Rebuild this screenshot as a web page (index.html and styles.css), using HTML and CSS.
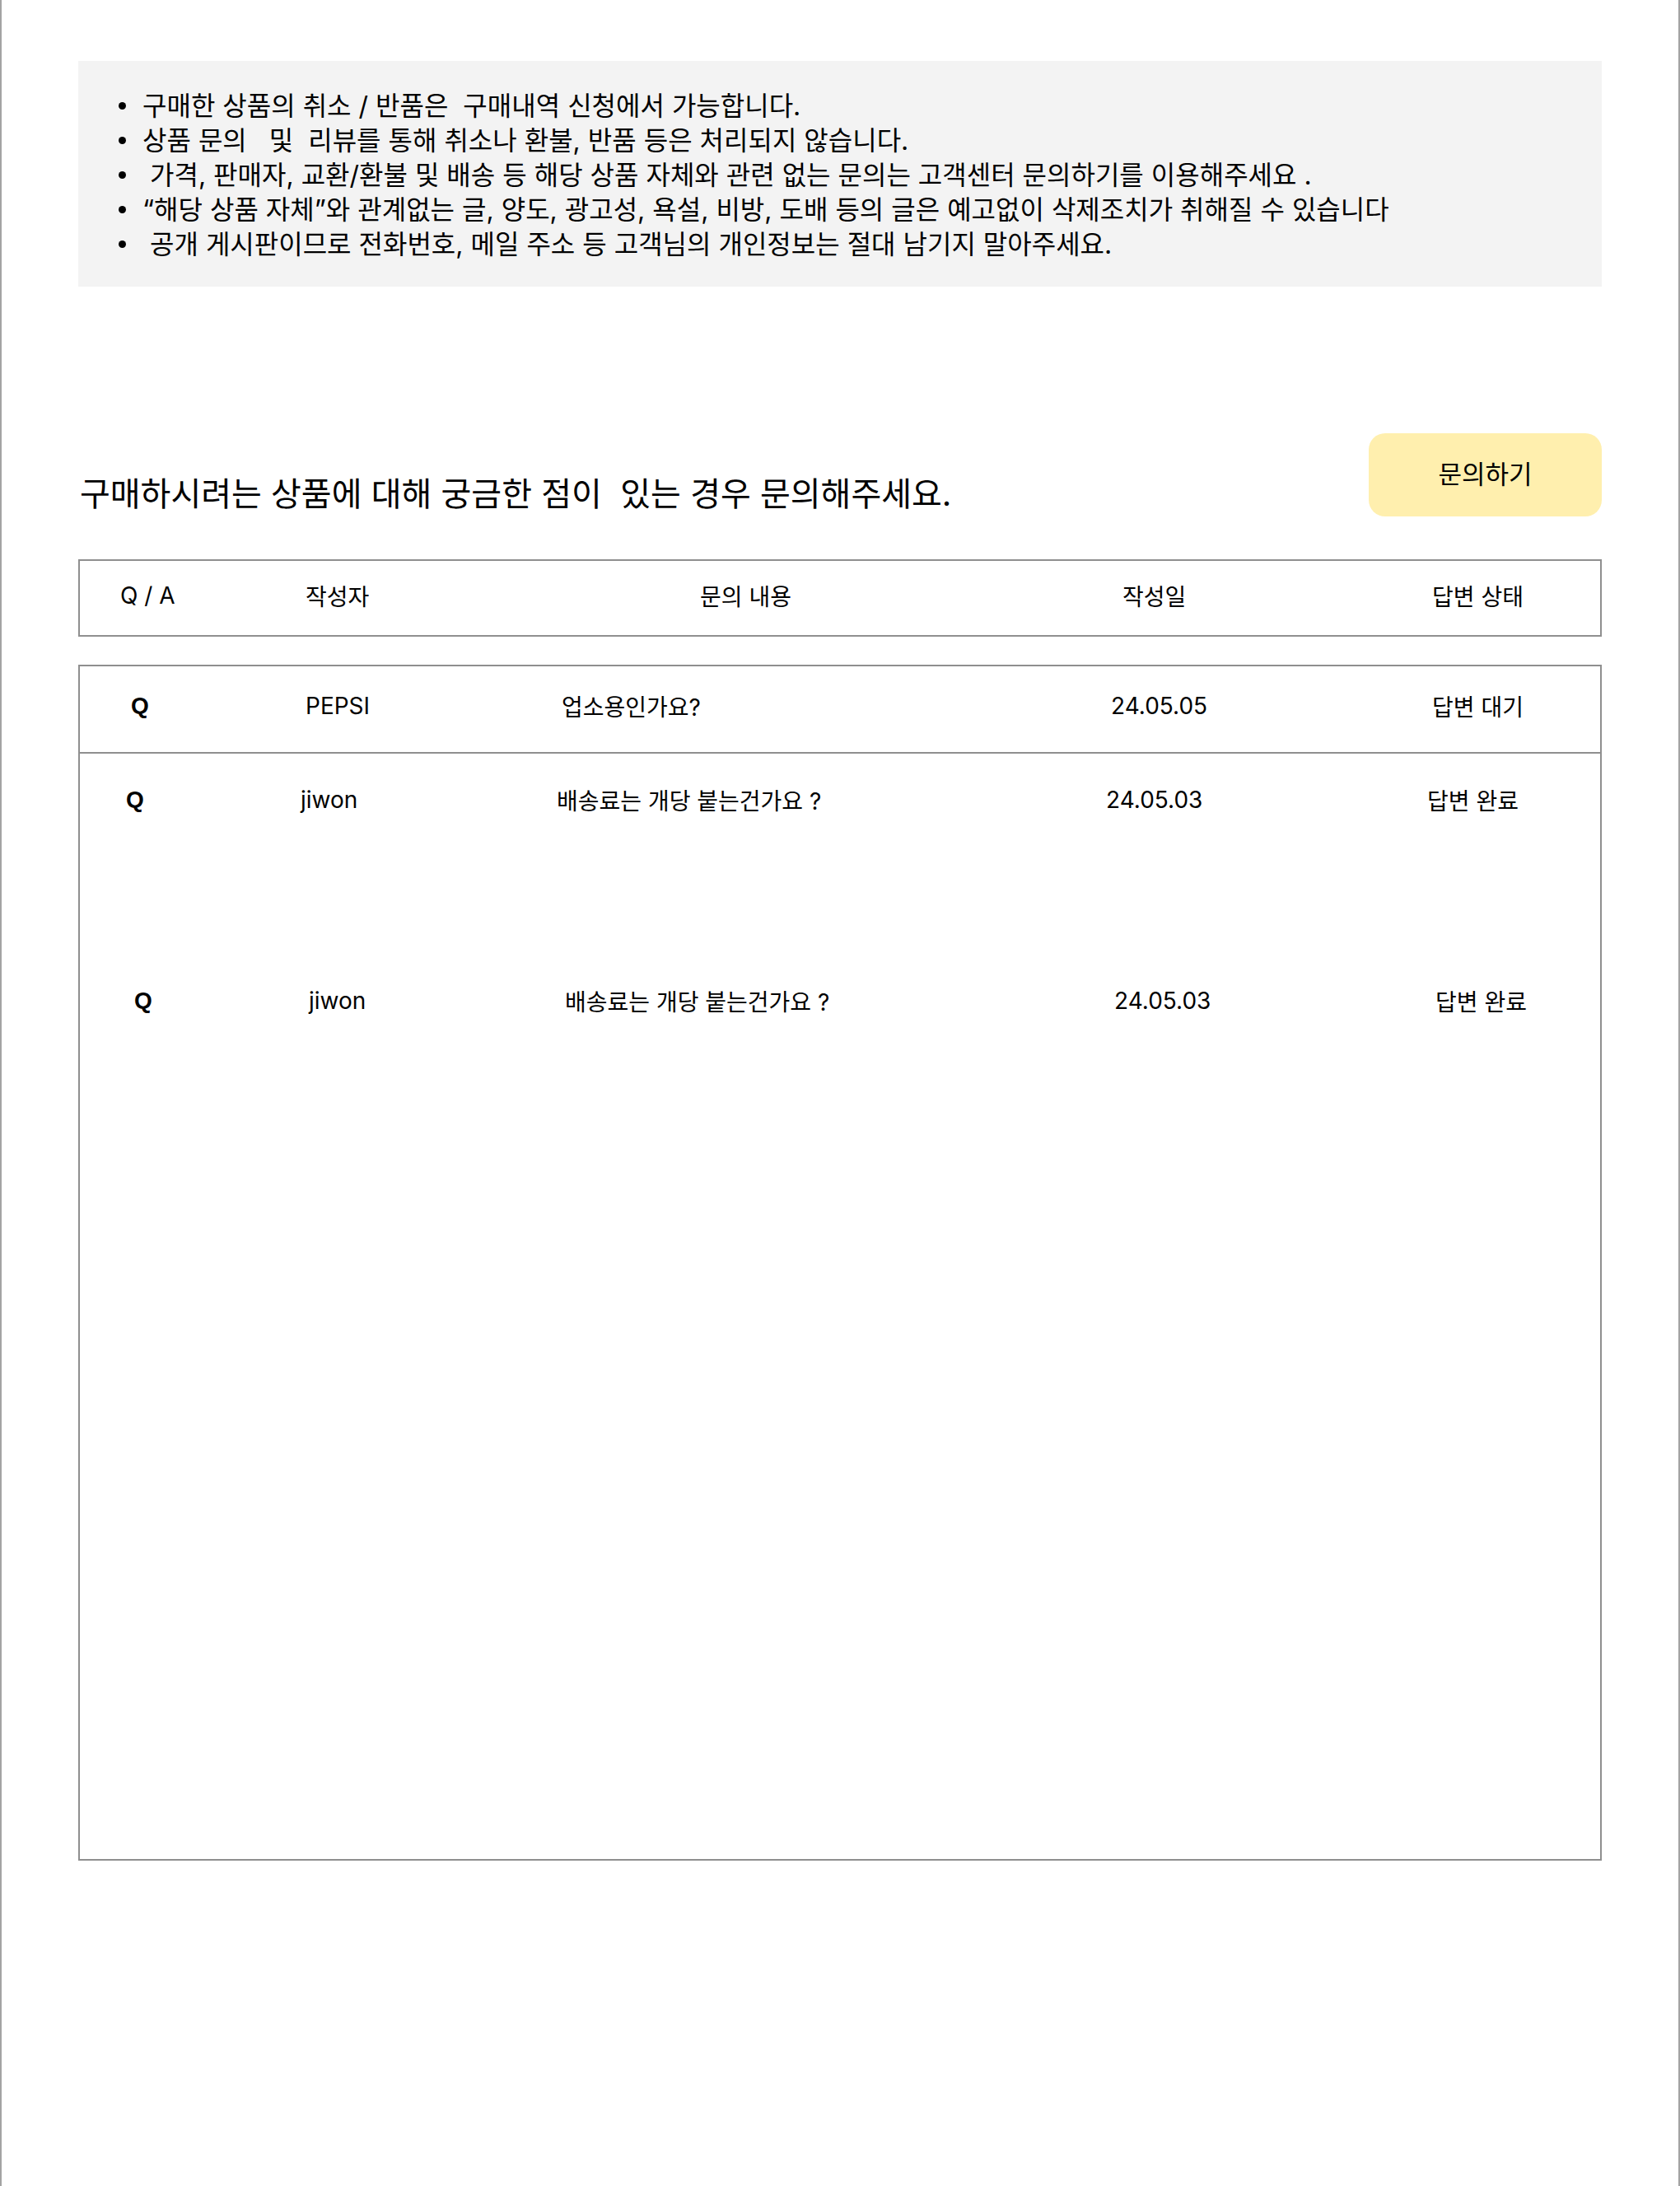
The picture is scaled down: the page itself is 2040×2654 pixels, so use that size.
FILE: index.html
```html
<!DOCTYPE html>
<html lang="ko">
<head>
<meta charset="utf-8">
<title>상품 문의</title>
<link rel="stylesheet" href="styles.css">
</head>
<body>
<div class="page">
  <section class="notice">
    <ul class="notice-list">
      <li>구매한 상품의 취소 / 반품은  구매내역 신청에서 가능합니다.</li>
      <li>상품 문의   및  리뷰를 통해 취소나 환불, 반품 등은 처리되지 않습니다.</li>
      <li> 가격, 판매자, 교환/환불 및 배송 등 해당 상품 자체와 관련 없는 문의는 고객센터 문의하기를 이용해주세요 .</li>
      <li>“해당 상품 자체”와 관계없는 글, 양도, 광고성, 욕설, 비방, 도배 등의 글은 예고없이 삭제조치가 취해질 수 있습니다</li>
      <li> 공개 게시판이므로 전화번호, 메일 주소 등 고객님의 개인정보는 절대 남기지 말아주세요.</li>
    </ul>
  </section>

  <div class="qna-head">
    <h2 class="qna-title">구매하시려는 상품에 대해 궁금한 점이  있는 경우 문의해주세요.</h2>
    <button class="ask-btn" type="button">문의하기</button>
  </div>

  <div class="table-head">
    <span>Q / A</span>
    <span>작성자</span>
    <span>문의 내용</span>
    <span>작성일</span>
    <span>답변 상태</span>
  </div>

  <div class="table-body">
    <div class="row row-first">
      <span class="q">Q</span>
      <span>PEPSI</span>
      <span>업소용인가요?</span>
      <span>24.05.05</span>
      <span>답변 대기</span>
    </div>
    <div class="row row-second">
      <span class="q">Q</span>
      <span>jiwon</span>
      <span>배송료는 개당 붙는건가요 ?</span>
      <span>24.05.03</span>
      <span>답변 완료</span>
    </div>
    <div class="row row-third">
      <span class="q">Q</span>
      <span>jiwon</span>
      <span>배송료는 개당 붙는건가요 ?</span>
      <span>24.05.03</span>
      <span>답변 완료</span>
    </div>
  </div>
</div>
</body>
</html>
```

FILE: styles.css
```css
* {
  box-sizing: border-box;
}

html, body {
  margin: 0;
  padding: 0;
  background: #ffffff;
}

body {
  font-family: Inter, "Noto Sans CJK KR", sans-serif;
  color: #000000;
}

.page {
  min-height: 2654px;
  border-left: 2px solid #a3a3a3;
  border-right: 2px solid #a3a3a3;
  padding: 74px 93px 0 93px;
}

/* Notice box */
.notice {
  background: #f3f3f3;
  padding: 34px 0 30px 0;
}

.notice-list {
  list-style: none;
  margin: 0;
  padding: 0 0 0 49px;
  font-size: 32px;
  line-height: 42px;
}

.notice-list li {
  white-space: pre-wrap;
}

.notice-list li::before {
  content: "";
  display: inline-block;
  width: 9px;
  height: 9px;
  border-radius: 50%;
  background: #000000;
  margin-right: 20px;
  vertical-align: 7px;
}

/* Title + button */
.qna-head {
  display: flex;
  justify-content: space-between;
  align-items: flex-end;
  margin-top: 178px;
}

.qna-title {
  margin: 0;
  font-weight: 400;
  font-size: 40px;
  line-height: 52px;
  white-space: pre;
  padding-left: 2px;
}

.ask-btn {
  width: 283px;
  height: 101px;
  border: none;
  border-radius: 20px;
  background: #ffefae;
  font-family: Inter, "Noto Sans CJK KR", sans-serif;
  font-size: 31px;
  color: #000000;
  padding: 0 0 6px 0;
  margin-bottom: -1px;
}

/* Table */
.table-head {
  margin-top: 53px;
  height: 94px;
  border: 2px solid #8f8f8f;
  display: grid;
  grid-template-columns: 225px 479px 513px 376px 1fr;
  align-items: center;
  padding: 0 0 6px 49px;
  font-size: 28px;
}

.table-body {
  margin-top: 34px;
  height: 1452px;
  border: 2px solid #8f8f8f;
  font-size: 28px;
}

.row {
  display: grid;
  grid-template-columns: 212px 311px 667px 390px 1fr;
  align-items: center;
}

.row-first {
  height: 106px;
  border-bottom: 2px solid #8f8f8f;
  padding: 0 0 8px 62px;
}

.row-second {
  height: 112px;
  padding-left: 56px;
}

.row-third {
  height: 112px;
  margin-top: 132px;
  padding-left: 66px;
}

.q {
  font-family: "Liberation Sans", Arial, sans-serif;
  font-weight: 700;
  font-size: 28px;
}
```
